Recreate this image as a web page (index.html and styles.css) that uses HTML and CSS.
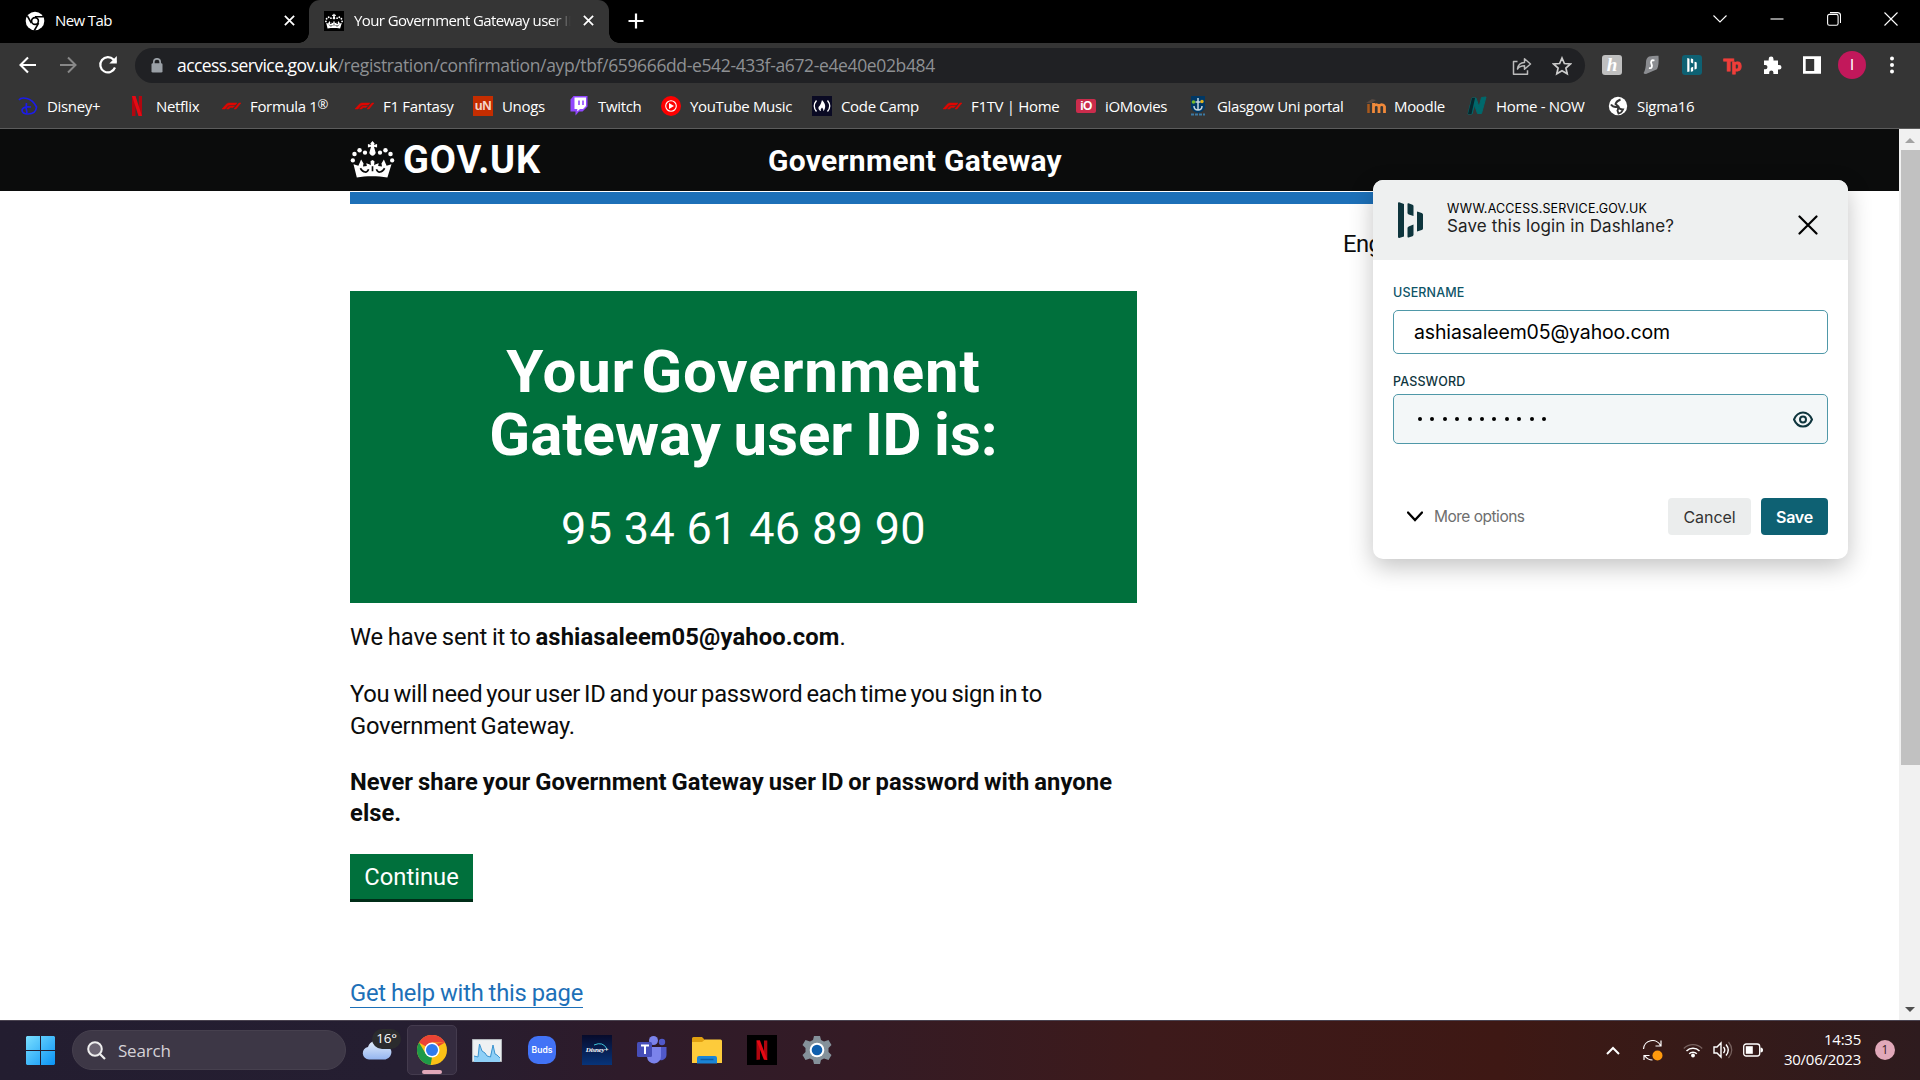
FILE: index.html
```html
<!DOCTYPE html>
<html lang="en">
<head>
<meta charset="utf-8">
<title>Your Government Gateway user ID</title>
<link rel="stylesheet" href="styles.css">
</head>
<body>
<svg class="defs" width="0" height="0">
  <symbol id="crown" viewBox="0 0 45 38">
    <g fill="#fff">
      <path d="M22.5 0l2.2 2.6-.9 1.5 3.4-1v3.6l-3.2-.9 1.2 4.2a3.2 3.2 0 1 1-5.4 0L21 5.8l-3.2.9V3.1l3.4 1-.9-1.5z"/>
      <circle cx="14.8" cy="12" r="2.2"/><circle cx="30.2" cy="12" r="2.2"/>
      <circle cx="9.200" cy="9.6" r="2.300"/><circle cx="35.800" cy="9.6" r="2.300"/>
      <circle cx="4" cy="13.400" r="2.300"/><circle cx="41" cy="13.400" r="2.300"/>
      <circle cx="2.300" cy="20" r="2.200"/><circle cx="42.700" cy="20" r="2.200"/>
      <path d="M3 24l5 1.5L10.800 19l2.500 4-.6 3.200 4-.4-.6-3 3 1 1.700 1-.3-4 2-1.200 2 1.200-.3 4 1.700-1 3-1-.6 3 4 .4-.6-3.200 2.500-4 2.800 6.500 5-1.500-4.200 13.500c-10-1.600-22-1.600-31.400 0z"/>
    </g>
    <path d="M10 28c3 5 7 5 8.500 1M35 28c-3 5-7 5-8.500 1M22.500 26v5" fill="none" stroke="#0b0c0c" stroke-width="1.700"/>
  </symbol>
  <symbol id="f1" viewBox="0 0 20 20">
    <path d="M1 13L5 8.500Q6.200 7 8 7h8l-1.700 2H9Q7.500 9 6.800 9.800L4 13zM5.500 13l2-2.300q.6-.7 1.700-.7h4.300l-1.500 1.600H9L7.800 13zM13 13l5-6h2l-5 6z" fill="#e10600" stroke="#e10600" stroke-width=".5"/>
  </symbol>
  <symbol id="x" viewBox="0 0 10 10"><path d="M.8.8l8.400 8.400M9.200.8L.8 9.200" fill="none" stroke="currentColor" stroke-width="1.600"/></symbol>
  <symbol id="dashlane" viewBox="0 0 25 36">
    <path d="M0 1.200Q0 0 1.200.3L6 2v32.500L1.200 36Q0 36 0 35zM9.500 2q0-1 1-.7l4 1.500q1 .4 1 1.400V14l-4.800-1.600q-1.200-.4-1.200-1.400zM19 10.300q0-1 1-.6l3.700 1.400q1.300.5 1.300 1.500v14q0 1-1.300 1.500L19 29.600zM9.500 26q0-1 1.200-1.500L15.500 22.400v10.400q0 1-1 1.400l-4 1.200q-1 .3-1-.6z" fill="currentColor"/>
  </symbol>
</svg>

<div class="tabs">
  <div class="tab">
    <svg class="fav" viewBox="0 0 20 20"><circle cx="10" cy="10" r="9.300" fill="#fff"/><circle cx="10" cy="10" r="3.400" fill="#fff" stroke="#000" stroke-width="1.600"/><path d="M10 5.800h8.600M6.400 12.200L2.400 5M13.600 12.200L9.300 19.500" stroke="#000" stroke-width="1.600"/></svg>
    <span class="tab-title">New Tab</span>
    <svg class="close"><use href="#x"/></svg>
  </div>
  <div class="tab active">
    <span class="fav crown-fav"><svg width="18" height="16"><use href="#crown"/></svg></span>
    <span class="tab-title fade">Your Government Gateway user ID</span>
    <svg class="close"><use href="#x"/></svg>
  </div>
  <svg class="plus" viewBox="0 0 16 16"><path d="M8 .5v15M.5 8h15" stroke="#fff" stroke-width="2.200"/></svg>
  <div class="window-buttons">
    <svg viewBox="0 0 14 14"><path d="M.5 3.500L7 10l6.500-6.500" class="thin"/></svg>
    <svg viewBox="0 0 14 14"><path d="M.5 7h13" class="thin"/></svg>
    <svg viewBox="0 0 14 14"><rect x=".6" y="2.400" width="10.500" height="10.800" rx="1.800" class="thin"/><path d="M3 .6h7.500q3 0 3 3V11" class="thin"/></svg>
    <svg viewBox="0 0 14 14"><path d="M.5.5l13 13M13.500.5l-13 13" class="thin"/></svg>
  </div>
</div>

<div class="toolbar">
  <div class="nav">
    <svg viewBox="0 0 20 20"><path d="M18 10H3M10 2.500L2.500 10l7.500 7.500" fill="none" stroke="#fff" stroke-width="2.100"/></svg>
    <svg viewBox="0 0 20 20"><path d="M2 10h15M10 2.500l7.500 7.500-7.500 7.500" fill="none" stroke="#888" stroke-width="2"/></svg>
    <svg viewBox="0 0 20 20"><path d="M17 12.500A7.600 7.600 0 1 1 15.500 4.600L18 7" fill="none" stroke="#fff" stroke-width="2.200"/><path d="M18.800 1v7.500h-7.500z" fill="#fff"/></svg>
  </div>
  <div class="omnibox">
    <svg class="lock" viewBox="0 0 12 15"><path d="M2.800 6V4a3.200 3.200 0 0 1 6.400 0v2" fill="none" stroke="#9aa0a6" stroke-width="1.700"/><rect x=".5" y="5.300" width="11" height="9.200" rx="1.300" fill="#9aa0a6"/></svg>
    <span class="url"><span class="host">access.service.gov.uk</span><span class="path">/registration/confirmation/ayp/tbf/659666dd-e542-433f-a672-e4e40e02b484</span></span>
    <svg class="share" viewBox="0 0 20 20"><path d="M5.500 5.500h-4v12.800h14v-4M5.500 13c.5-4.500 3-6.500 7-6.600V2.700L18.500 8l-6 5.200V9.800c-3.500 0-5.500.9-7 3.200z" fill="none" stroke="#bbb" stroke-width="1.500" stroke-linejoin="round"/></svg>
    <svg class="star" viewBox="0 0 20 20"><path d="M10 2l2.400 5.500 6 .5-4.500 4 1.300 5.800L10 14.800l-5.200 3L6.100 12 1.600 8l6-.5z" fill="none" stroke="#ccc" stroke-width="1.700"/></svg>
  </div>
  <div class="extensions">
    <span class="ext honey">h</span>
    <svg viewBox="0 0 20 20"><path d="M7 1.500q4-1 9.500-.8.700 9-1.500 13.500L4 19q-2.500 0-2.400-1Q4 14 4 7q0-4 3-5.500z" fill="#8b8d91"/><path d="M12.500 5.500C9 4.500 8.500 7 9.500 9s.5 4.800-2.500 4" fill="none" stroke="#fff" stroke-width="1.800"/></svg>
    <span class="ext dash"><svg viewBox="0 0 25 36"><use href="#dashlane"/></svg></span>
    <span class="ext tp">Tp</span>
    <svg viewBox="0 0 20 20"><path d="M2 5.500h4.700V4a2.400 2.400 0 0 1 4.800 0v1.500H16v4.400h1.200a2.300 2.300 0 0 1 0 4.600H16V19h-4.600v-1.500a2.100 2.100 0 0 0-4.200 0V19H2v-4.700h1.300a2.200 2.200 0 0 0 0-4.400H2z" fill="#fff"/></svg>
    <svg viewBox="0 0 20 20"><path d="M1 1.200h18v17.600H1zM3.700 4v12h8.500V4z" fill="#fff" fill-rule="evenodd"/></svg>
    <span class="avatar">I</span>
    <svg viewBox="0 0 20 20"><g fill="#fff"><circle cx="10" cy="3.500" r="2"/><circle cx="10" cy="10" r="2"/><circle cx="10" cy="16.500" r="2"/></g></svg>
  </div>
</div>

<div class="bookmarks">
  <span class="bm"><svg viewBox="0 0 20 20"><path d="M1 4Q3 1 9 2.500T18.500 11Q18 18 10 18q-6 0-6-4 1-4 9-3M8.500 7Q7.500 12 9 17" fill="none" stroke="#1c1ce8" stroke-width="1.700"/></svg>Disney+</span>
  <span class="bm"><svg viewBox="0 0 20 20"><path d="M5 0h3.500v20L5 20zM11.800 0H15v20h-3.200z" fill="#b1060f"/><path d="M5 0h3.500L15 20h-3.500z" fill="#e50914"/></svg>Netflix</span>
  <span class="bm"><svg><use href="#f1"/></svg>Formula 1<sup>®</sup></span>
  <span class="bm"><svg><use href="#f1"/></svg>F1 Fantasy</span>
  <span class="bm"><span class="ico un">uN</span>Unogs</span>
  <span class="bm"><svg viewBox="0 0 20 20"><path d="M4.500 0H18.500v10.500l-5 5h-3.500L6.500 19.500v-4H1.500V3.500z" fill="#9146ff"/><path d="M5.500 1.500H17v8.500l-3 3h-3l-2.700 2.500V13H5.500z" fill="#fff"/><path d="M10 4.500v4.500M14 4.500v4.500" stroke="#9146ff" stroke-width="1.600"/></svg>Twitch</span>
  <span class="bm"><svg viewBox="0 0 20 20"><circle cx="10" cy="10" r="10" fill="#f00"/><circle cx="10" cy="10" r="5.300" fill="none" stroke="#fff" stroke-width="1.100"/><path d="M8 7l5 3-5 3z" fill="#fff"/></svg>YouTube Music</span>
  <span class="bm"><svg viewBox="0 0 20 20"><path d="M0 0h20v20H0z" fill="#0a0a23"/><path d="M4.500 4.500q-4.500 5.500 0 11M15.500 4.500q4.500 5.500 0 11" fill="none" stroke="#fff" stroke-width="1.300"/><path d="M10 4q4 4 3 8-.5 2.500-2 3 1-2-1-3.500Q8 13 9 15q-3-1-2.500-4Q8.500 9.500 10 4z" fill="#fff"/></svg>Code Camp</span>
  <span class="bm"><svg><use href="#f1"/></svg>F1TV | Home</span>
  <span class="bm"><span class="ico io">iO</span>iOMovies</span>
  <span class="bm"><svg viewBox="0 0 20 20"><path d="M3 0h14v12q-2 4-7 5-5-1-7-5z" fill="#003865"/><path d="M10 2v12M6 10q0 4 4 4t4-4M7.500 6h5" fill="none" stroke="#c5d5dd" stroke-width="1.500"/><circle cx="5.500" cy="6" r="1.800" fill="#73b82b"/><circle cx="14" cy="5.500" r="1.700" fill="#e2b31c"/><path d="M3 18.500h14" stroke="#3b7aa5" stroke-width="2" stroke-dasharray="3 1"/></svg>Glasgow Uni portal</span>
  <span class="bm"><span class="ico moodle"><svg viewBox="0 0 22 20"><path d="M8.500 17v-6.500a3 3 0 0 1 5.500 0V17M14 10.500a3 3 0 0 1 5.500 0V17M8.500 7v8" fill="none" stroke="#f0893a" stroke-width="2.800"/><path d="M3.500 8v9" stroke="#a8591c" stroke-width="2.500"/><path d="M1 7l6-4 4 1-4 3z" fill="#594a42"/></svg></span>Moodle</span>
  <span class="bm"><svg viewBox="0 0 20 20"><path d="M1 18L5 2h4l3 9 2.500-9.500L19 1l-4.500 16.500h-4L7.500 9 5 18z" fill="#00696c" stroke="#00696c"/><path d="M1 18L5 2h3L4.500 18z" fill="#06282e"/></svg>Home - NOW</span>
  <span class="bm"><svg viewBox="0 0 20 20"><circle cx="10" cy="10" r="9.200" fill="#fff"/><path d="M3 8.500q2 3 6 2.500 2 1 .5 3.500l1 3q3-.5 4.500-4-4 0-4.500-3L7.500 8q1-3 5-4.500" fill="none" stroke="#353535" stroke-width="1.900"/></svg>Sigma16</span>
</div>

<div class="viewport">
  <main class="page">
    <header class="gov-header">
      <div class="wrap gov-inner">
        <svg class="crown"><use href="#crown"/></svg>
        <span class="gov-logo">GOV.UK</span>
        <span class="service">Government Gateway</span>
      </div>
    </header>
    <div class="wrap">
      <div class="bar"></div>
      <div class="language"><span>English</span></div>
      <div class="column">
        <section class="panel">
          <h1>Your Government<br><span class="second">Gateway user ID is:</span></h1>
          <div class="user-id">95 34 61 46 89 90</div>
        </section>
        <p class="sent">We have sent it to <b>ashiasaleem05@yahoo.com</b>.</p>
        <p>You will need your user ID and your password each time you sign in to<br>Government Gateway.</p>
        <p class="warn">Never share your Government Gateway user ID or password with anyone<br>else.</p>
        <button class="continue">Continue</button>
        <div><a class="help">Get help with this page</a></div>
      </div>
    </div>
  </main>
  <div class="scrollbar">
    <i class="arrow up"></i>
    <div class="thumb"></div>
    <i class="arrow down"></i>
  </div>
</div>

<div class="taskbar">
  <svg class="start" viewBox="0 0 29 29"><defs><linearGradient id="win" x1="0" y1="0" x2="1" y2="1" gradientUnits="objectBoundingBox"><stop offset="0" stop-color="#7adfff"/><stop offset="1" stop-color="#0a93f5"/></linearGradient></defs><path d="M1 0h13v14H0V1zM15 0h13l1 1v13H15zM0 15h14v14H1l-1-1zM15 15h14v13l-1 1H15z" fill="url(#win)"/></svg>
  <div class="search"><svg viewBox="0 0 19 19"><circle cx="8" cy="8" r="6.800" fill="#6b6472" stroke="#eee" stroke-width="2"/><path d="M13 13l5 5" stroke="#eee" stroke-width="2.200"/></svg><span>Search</span></div>
  <div class="app weather"><svg width="30" height="20" viewBox="0 0 30 20"><defs><linearGradient id="cl" x1="0" y1="0" x2="0" y2="1"><stop offset="0" stop-color="#e4eefb"/><stop offset="1" stop-color="#94b5f0"/></linearGradient></defs><path d="M7 19.500a6.300 6.300 0 0 1-1-12.500A8 8 0 0 1 20.500 5a7 7 0 0 1 3 14.500z" fill="url(#cl)"/></svg><span class="temp">16°</span></div>
  <div class="app current"><svg viewBox="0 0 30 30"><circle cx="15" cy="15" r="15" fill="#fbc116"/><path d="M15 15L2 7.500A15 15 0 0 1 28 7.500z" fill="#ea4335"/><path d="M2 7.500L8.600 18.500 15 22l-1.300 8A15 15 0 0 1 2 7.500z" fill="#1e9a48"/><path d="M15 7.500h13L15 9zM21.500 18.500L15 30h-1.500l4-8z" fill="#fbc116"/><circle cx="15" cy="15" r="7.500" fill="#fff"/><circle cx="15" cy="15" r="6" fill="#2f7bee"/></svg></div>
  <div class="app"><svg viewBox="0 0 30 30"><rect x=".6" y="4.600" width="28.800" height="21.800" fill="#eef1f3" stroke="#b9bec2"/><path d="M2 21l4 1 1-13 3 7 3 2 2 3 3 1 3-12 2 9 2 1 3 3v4H2z" fill="#8fd0f7"/><path d="M2 21l4 1 1.500-13L10 16l3 2 2 3 3.500 1L21 10l2 9 2 1 3 3" fill="none" stroke="#3a93cf"/></svg></div>
  <div class="app"><span class="buds">Buds</span></div>
  <div class="app"><span class="disney"><svg viewBox="0 0 30 30"><path d="M12 10q9-4 13 4" fill="none" stroke="#3ec4d9"/></svg><b>Disney+</b></span></div>
  <div class="app"><svg viewBox="0 0 30 30"><circle cx="25" cy="7" r="3.200" fill="#5059c9"/><circle cx="16.500" cy="5.500" r="4.500" fill="#7b83eb"/><path d="M20 12h9.500v8a5.500 5.500 0 0 1-9.500 3.500z" fill="#5059c9"/><path d="M10 12h14v9a7 7 0 0 1-14 1z" fill="#7b83eb"/><rect x="0" y="7" width="15" height="15" rx="1.500" fill="#464eb8"/><path d="M4 10.500h8M8 10.500V19" stroke="#fff" stroke-width="2"/></svg></div>
  <div class="app"><svg viewBox="0 0 30 30"><path d="M0 3.500Q0 2 1.500 2H10l3 3h15v8H0z" fill="#e0a010"/><path d="M0 7h10l3-2.500h15.500q1.500 0 1.500 1.500v22H0z" fill="#fdcb3b"/><path d="M5 28.500V23q0-2 2-2h16q2 0 2 2v5.500z" fill="#1b85d6"/><path d="M8.500 24.500h13" stroke="#0c5da5" stroke-width="1.500"/></svg></div>
  <div class="app"><svg viewBox="0 0 30 30"><path d="M0 0h30v30H0z" fill="#000"/><path d="M9.500 5.500H13v19l-3.500.5zM17 5.500h3.300V25l-3.300-.5z" fill="#b1060f"/><path d="M9.500 5.500H13L20.300 25l-3.500-.5z" fill="#e50914"/></svg></div>
  <div class="app"><svg viewBox="0 0 30 30"><path d="M12 1h6l1 4 3 1.500 4.500-1.500 3 5-3 3v4l3 3-3 5-4.500-1.500L19 25l-1 4h-6l-1-4-3-1.500L3.500 25l-3-5 3-3v-4l-3-3 3-5L8 6.500 11 5z" fill="#84919a"/><circle cx="15" cy="15" r="7.300" fill="#fff"/><circle cx="15" cy="15" r="5.300" fill="#0f5fad"/></svg></div>
  <div class="tray">
    <svg class="chev" viewBox="0 0 14 9"><path d="M1 8l6-6 6 6" fill="none" stroke="#fff" stroke-width="2"/></svg>
    <svg class="sync" viewBox="0 0 20 21"><path d="M1 9A9 9 0 0 1 18 5.500M18.500.5v5.500h-5.500M1.500 20v-4.500H7M2 15.500q3 4.500 8 4.500" fill="none" stroke="#fff" stroke-width="1.200"/><circle cx="15" cy="15.500" r="5" fill="#ff9a0d"/></svg>
    <svg class="wifi" viewBox="0 0 20 16"><path d="M.8 6.500a13 13 0 0 1 18.400 0" fill="none" stroke="#77625f" stroke-width="1.300"/><path d="M3.500 9a9.200 9.200 0 0 1 13 0M6.200 11.700a5.400 5.400 0 0 1 7.600 0" fill="none" stroke="#fff" stroke-width="1.500"/><circle cx="10" cy="13.500" r="1.900" fill="#fff"/></svg>
    <svg class="sound" viewBox="0 0 20 18"><path d="M1 6h3l4-4v14l-4-4H1zM10.500 6q2.500 3 0 6M13 3.500q4.500 5.500 0 11" fill="none" stroke="#fff" stroke-width="1.400"/><path d="M15.500 1q6.500 8 0 16" fill="none" stroke="#77625f" stroke-width="1.200"/></svg>
    <svg class="battery" viewBox="0 0 20 14"><rect x=".7" y="1" width="16" height="12" rx="2.500" fill="none" stroke="#fff" stroke-width="1.300"/><rect x="2.800" y="3.200" width="7" height="7.600" fill="#fff"/><path d="M17.500 4.500q2.500 0 2.500 2.500t-2.500 2.500z" fill="#fff"/></svg>
    <div class="clock">14:35<br>30/06/2023</div>
    <span class="notify">1</span>
  </div>
</div>

<div class="popup">
  <div class="popup-head">
    <svg class="dash-logo"><use href="#dashlane"/></svg>
    <div class="popup-text"><div class="site">WWW.ACCESS.SERVICE.GOV.UK</div><div class="question">Save this login in Dashlane?</div></div>
    <svg class="popup-close" viewBox="0 0 20 20"><path d="M1.500 1.500l17 17M18.500 1.500l-17 17" stroke="#000" stroke-width="2.200" stroke-linecap="round"/></svg>
  </div>
  <div class="popup-body">
    <label class="username-label">USERNAME</label>
    <div class="field">ashiasaleem05@yahoo.com</div>
    <label class="password-label">PASSWORD</label>
    <div class="field password">
      <span class="dots"><i></i><i></i><i></i><i></i><i></i><i></i><i></i><i></i><i></i><i></i><i></i></span>
      <svg viewBox="0 0 20 16"><path d="M1 8q3-7 9-7t9 7q-3 7-9 7T1 8z" fill="none" stroke="#0e353d" stroke-width="2"/><circle cx="10" cy="8" r="3" fill="none" stroke="#0e353d" stroke-width="2"/></svg>
    </div>
    <div class="actions">
      <svg viewBox="0 0 16 11"><path d="M1 1.500l7 7.500 7-7.500" fill="none" stroke="#000" stroke-width="2.300" stroke-linecap="round"/></svg>
      <span class="more">More options</span>
      <button class="cancel">Cancel</button>
      <button class="save">Save</button>
    </div>
  </div>
</div>
</body>
</html>
```
FILE: styles.css
```css
* { box-sizing: border-box; }
body {
  margin: 0;
  width: 1920px;
  height: 1080px;
  overflow: hidden;
  display: flex;
  flex-direction: column;
  position: relative;
  background: #fff;
  font-family: "Open Sans", "Noto Sans", sans-serif;
}
svg { display: block; flex: none; }
button { border: 0; padding: 0; font: inherit; }
.defs { position: absolute; }

/* Tab strip */
.tabs { height: 43px; flex: none; background: #000; display: flex; align-items: center; color: #fff; font-size: 15px; }
.tab { display: flex; align-items: center; height: 43px; width: 309px; padding: 0 14px 2px 25px; letter-spacing: -0.6px; }
.tab.active { width: 300px; padding-left: 15px; padding-right: 15px; background: #353535; border-radius: 11px 11px 0 0; position: relative; }
.tab.active::before, .tab.active::after {
  content: ""; position: absolute; bottom: 0; width: 10px; height: 10px;
}
.tab.active::before { left: -10px; background: radial-gradient(circle at 0 0, transparent 9.500px, #353535 10px); }
.tab.active::after { right: -10px; background: radial-gradient(circle at 100% 0, transparent 9.500px, #353535 10px); }
.fav { width: 20px; height: 20px; flex: none; }
.crown-fav { background: #000; display: grid; place-items: center; }
.tab-title { flex: 1; margin: 0 10px 0 10px; padding-bottom: 2px; white-space: nowrap; overflow: hidden; }
.tab-title.fade { -webkit-mask-image: linear-gradient(90deg, #000 90%, transparent 99%); mask-image: linear-gradient(90deg, #000 90%, transparent 99%); }
.close { width: 11px; height: 11px; }
.plus { width: 16px; height: 16px; margin: 0 0 1px 19px; }
.window-buttons { margin-left: auto; display: flex; gap: 43px; padding: 0 22px 6px 0; }
.window-buttons svg { width: 14px; height: 14px; }
.thin { fill: none; stroke: #fff; stroke-width: 1.100; }

/* Address bar */
.toolbar { height: 45px; flex: none; background: #353535; display: flex; align-items: center; }
.nav { display: flex; gap: 20px; width: 135px; padding: 0 0 2px 18px; }
.nav svg { width: 20px; height: 20px; }
.omnibox { width: 1450px; height: 35px; border-radius: 18px; background: #202124; display: flex; align-items: center; padding: 0 13px 0 16px; }
.lock { width: 12px; height: 15px; }
.url { margin: 0 auto 0 14px; padding-bottom: 2px; font-size: 17.500px; white-space: nowrap; }
.host { color: #fff; letter-spacing: -0.560px; }
.path { color: #8e9093; letter-spacing: -0.360px; }
.share { width: 20px; height: 20px; margin-right: 20px; }
.star { width: 20px; height: 20px; }
.extensions { display: flex; align-items: center; flex: 1; padding: 0 0 1px 17px; gap: 20px; }
.extensions > svg, .ext { width: 20px; height: 20px; flex: none; }
.ext { display: grid; place-items: center; border-radius: 3px; overflow: hidden; }
.honey { background: #bfbfbf; color: #fff; font: italic bold 19px/18px "Liberation Serif", serif; }
.dash { background: #0e6173; color: #fff; }
.dash svg { width: 10px; height: 14px; }
.tp { color: #ef3e3a; font: 900 17px/20px Lato, sans-serif; letter-spacing: -0.500px; -webkit-text-stroke: 1px #ef3e3a; overflow: visible; }
.avatar { width: 28px; height: 28px; margin: 0 -4px; border-radius: 50%; background: #c2185b; color: #fff; font: 15px/28px Roboto, sans-serif; text-align: center; flex: none; }

/* Bookmarks */
.bookmarks {
  height: 41px; flex: none; background: #353535; border-bottom: 1px solid #5c5c5c; padding: 0 0 4px 18px;
  display: grid; align-items: center; grid-template-columns: 109px 94px 133px 119px 96px 92px 151px 130px 134px 112px 177px 102px 141px 100px;
  color: #fff; font-size: 15px; letter-spacing: -0.330px; white-space: nowrap;
}
.bm { display: flex; align-items: center; line-height: 20px; padding-bottom: 1px; }
.bm > svg, .ico { width: 20px; height: 20px; margin-right: 9px; flex: none; }
.bm sup { font-size: 13px; line-height: 1; align-self: center; margin-top: -3px; }
.ico { display: grid; place-items: center; color: #fff; font: bold 13px/20px "Liberation Sans", sans-serif; letter-spacing: -0.500px; }
.un { background: #c52d00; color: #f5d5c8; }
.io { background: #cb2c4c; height: 14px; border-radius: 2px; line-height: 14px; font-size: 12px; }
.moodle svg { width: 22px; height: 20px; }

/* Web page */
.viewport { flex: none; height: 891px; display: flex; overflow: hidden; }
.page { width: 1899px; flex: none; color: #0b0c0c; font: 23.750px/31.250px Roboto, sans-serif; }
.wrap { width: 1200px; margin: 0 0 0 350px; }
.gov-header { background: #0b0c0c; height: 62px; color: #fff; font-weight: 700; }
.gov-inner { display: flex; align-items: center; height: 62px; padding-top: 2px; }
.crown { width: 45px; height: 37px; margin-top: -4px; }
.gov-logo { font-size: 38px; letter-spacing: 0.900px; width: 373px; padding-left: 8px; }
.service { font-size: 30px; letter-spacing: 0.300px; }
.bar { height: 12px; margin-top: 1px; background: #1d70b8; }
.language { height: 87px; padding: 25px 0 0 993px; letter-spacing: -0.500px; }
.column { width: 787px; }
.panel { height: 312px; padding-top: 50px; background: #00703c; color: #fff; text-align: center; }
.panel h1 { margin: 0 0 38px; font-size: 60px; line-height: 62.500px; letter-spacing: 0.880px; word-spacing: -9px; }
.second { letter-spacing: 0; word-spacing: -2.300px; }
.user-id { font-size: 45px; line-height: 50px; letter-spacing: 0.330px; }
p { margin: 0 0 25px; letter-spacing: -0.250px; word-spacing: -1.630px; white-space: nowrap; }
.sent { padding-top: 19px; margin-bottom: 26px; letter-spacing: -0.100px; word-spacing: -1.100px; }
.sent b { letter-spacing: 0.130px; }
.warn { font-weight: 700; letter-spacing: 0.057px; word-spacing: -1px; }
.continue { display: block; width: 123px; height: 48px; padding-top: 2px; margin-bottom: 76px; background: #00703c; color: #fff; border-bottom: 3px solid #002d18; }
.help { color: #1d70b8; letter-spacing: -0.200px; word-spacing: -0.700px; border-bottom: 1px solid #1d70b8; }

.scrollbar { width: 21px; flex: none; background: #f1f1f1; display: flex; flex-direction: column; align-items: center; }
.arrow { width: 0; height: 0; border: 5px solid transparent; }
.arrow.up { border-bottom-color: #a3a3a3; border-top-width: 0; margin: 9px 0 7px; }
.arrow.down { border-top-color: #505050; border-bottom-width: 0; margin: auto 0 8px; }
.thumb { width: 19px; height: 615px; background: #c1c1c1; align-self: flex-end; }

/* Save-login popup */
.popup {
  position: absolute; left: 1373px; top: 180px; width: 475px; height: 379px;
  background: #fff; border-radius: 10px; box-shadow: 0 8px 24px rgba(0, 0, 0, .24); overflow: hidden;
  font-family: Inter, sans-serif; color: #111;
}
.popup-head { height: 80px; background: #eef0f0; display: flex; padding: 0 30px 0 25px; }
.dash-logo { width: 25px; height: 36px; margin-top: 22px; color: #0e353d; }
.popup-text { padding: 20px 0 0 24px; flex: 1; }
.site { font-size: 12.500px; line-height: 17px; letter-spacing: 0.168px; color: #000; }
.question { font-size: 17px; line-height: 19px; letter-spacing: 0.129px; color: #222; }
.popup-close { width: 20px; height: 20px; margin-top: 35px; }
.popup-body { padding: 24px 20px 0; display: flex; flex-direction: column; }
label { font-size: 12.500px; line-height: 17px; font-weight: 500; color: #0e5468; letter-spacing: 0.150px; }
.field { height: 44px; margin-top: 9px; border: 1px solid #4f98a8; border-radius: 5px; padding: 0 14px 0 20px; display: flex; align-items: center; font-size: 19.500px; letter-spacing: -0.150px; color: #000; }
.password-label { margin-top: 19px; color: #0e353d; }
.password { height: 50px; margin-top: 4px; background: #f3f7f8; padding-left: 24px; }
.password svg { width: 20px; height: 17px; margin-left: auto; }
.dots { display: flex; gap: 8.400px; padding-bottom: 1px; }
.dots i { width: 4px; height: 4px; border-radius: 50%; background: #000; }
.actions { display: flex; align-items: center; margin-top: 54px; padding-left: 14px; font-size: 16px; }
.actions svg { width: 16px; height: 11px; }
.more { margin: 0 auto 0 11px; font-size: 15.500px; letter-spacing: -0.500px; color: #6e6e6e; }
.cancel, .save { height: 37px; border-radius: 4px; }
.cancel { width: 83px; background: #ebeded; color: #333; margin-right: 10px; letter-spacing: -0.080px; }
.save { width: 67px; background: #0e6173; color: #fff; font-weight: 600; letter-spacing: -0.220px; }

/* Taskbar */
.taskbar {
  height: 60px; flex: none; display: flex; align-items: center; color: #fff; border-top: 1px solid #4a4350; padding: 0 0 1px 26px;
  background: linear-gradient(90deg, #231d30 0, #251e31 400px, #2e1b2a 620px, #341b25 850px, #3d1a1b 1150px, #3e1814 1500px, #381a17 1650px, #2e1b1e 1920px);
}
.start { width: 29px; height: 29px; }
.search { width: 274px; height: 40px; margin: 0 11px 0 17px; border-radius: 20px; background: #3d3746; border: 1px solid #46404e; display: flex; align-items: center; gap: 12px; padding-left: 14px; font-size: 17px; letter-spacing: -0.200px; color: #d5d2d8; }
.search svg { width: 19px; height: 19px; }
.app { width: 50px; height: 50px; margin-right: 5px; display: grid; place-items: center; position: relative; border-radius: 5px; }
.app > svg { width: 30px; height: 30px; }
.weather { width: 39px; justify-items: start; padding-left: 5px; margin-right: 11px; }
.weather > svg { width: 30px; height: 20px; }
.temp { position: absolute; left: 15px; top: 4px; width: 29px; height: 20px; border-radius: 10px; background: #2b2b2d; font: 500 13.500px/19px "Open Sans", sans-serif; letter-spacing: -0.300px; text-align: center; }
.current { background: #352c40; border: 1px solid #443b4e; }
.current::after { content: ""; position: absolute; left: 14px; bottom: 0; width: 20px; height: 4px; border-radius: 2px; background: #e1a8b9; }
.buds { width: 28px; height: 28px; border-radius: 10px; background: #4273f6; font: 600 8.500px/28px Inter, sans-serif; text-align: center; }
.disney { width: 30px; height: 30px; background: linear-gradient(#070b2b, #07347a); display: grid; place-items: center; }
.disney svg, .disney b { grid-area: 1 / 1; }
.disney svg { width: 30px; height: 30px; }
.disney b { font: italic bold 7px/10px "Liberation Serif", serif; letter-spacing: -0.200px; }
.tray { margin-left: auto; display: flex; align-items: center; padding-right: 25px; }
.chev { width: 14px; height: 9px; margin-right: 22px; }
.sync { width: 21px; height: 21px; margin-right: 20px; }
.wifi { width: 20px; height: 16px; margin-right: 10px; }
.sound { width: 20px; height: 18px; margin-right: 10px; }
.battery { width: 20px; height: 14px; }
.clock { margin-left: 21px; padding-bottom: 2px; font-size: 15px; line-height: 20px; letter-spacing: -0.260px; text-align: right; }
.notify { margin-left: 14px; width: 20px; height: 20px; border-radius: 50%; background: #e1a8b9; color: #35191f; font-size: 12px; line-height: 20px; text-align: center; }
```
